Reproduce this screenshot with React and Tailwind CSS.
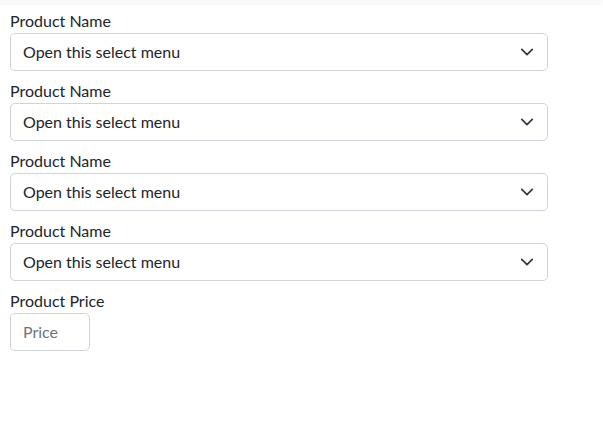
function Chevron() {
  return (
    <svg width="14" height="14" viewBox="0 0 16 16" fill="none" stroke="#343a40" strokeWidth="2" strokeLinecap="round" strokeLinejoin="round">
      <path d="M2 5l6 6 6-6" />
    </svg>
  );
}

function SelectField({ label }) {
  return (
    <div className="mb-[8px]">
      <label className="block text-[16px] leading-[24px] text-[#212529]">{label}</label>
      <div className="flex items-center justify-between w-[538px] h-[38px] border border-[#ced4da] rounded-[5px] bg-white pl-[12px] pr-[13px]">
        <span className="text-[16px] text-[#212529]">Open this select menu</span>
        <Chevron />
      </div>
    </div>
  );
}

export default function App() {
  return (
    <div className="w-[603px] h-[443px] bg-white" style={{ fontFamily: "Lato, 'Noto Sans', sans-serif" }}>
      <div className="h-[5px] w-[602px] bg-[#f8f9fa]" />
      <div className="px-[10px] pt-[4px]">
        <SelectField label="Product Name" />
        <SelectField label="Product Name" />
        <SelectField label="Product Name" />
        <SelectField label="Product Name" />
        <label className="block text-[16px] leading-[24px] text-[#212529]">Product Price</label>
        <div className="w-[80px] h-[38px] border border-[#ced4da] rounded-[5px] flex items-center pl-[12px]">
          <span className="text-[16px] text-[#6c757d]">Price</span>
        </div>
      </div>
    </div>
  );
}
